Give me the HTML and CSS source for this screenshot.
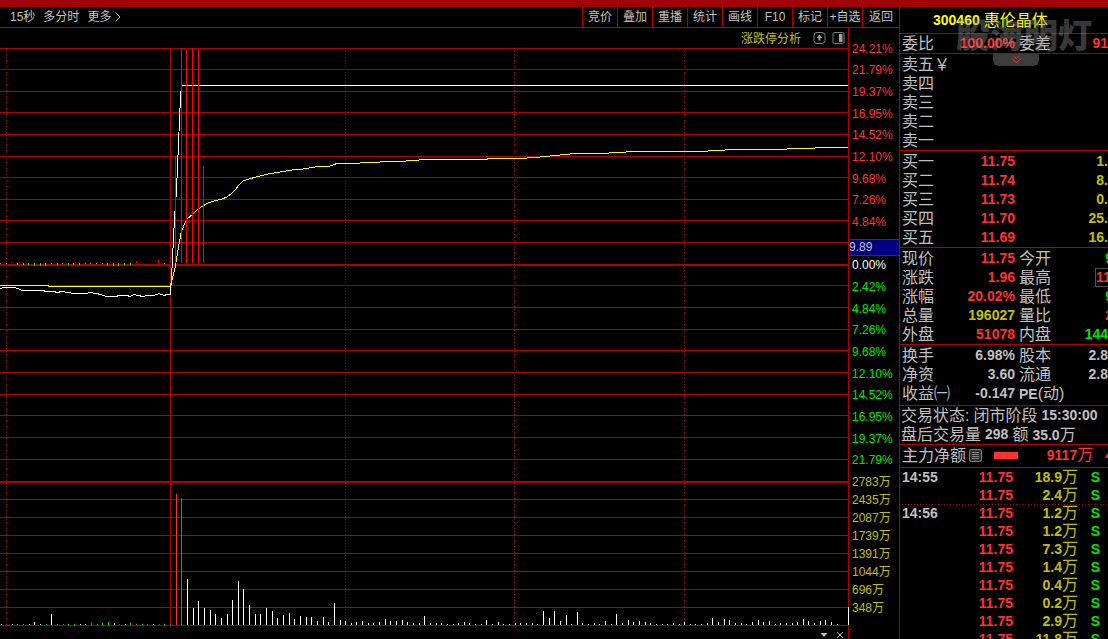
FILE: index.html
```html
<!DOCTYPE html>
<html lang="zh-CN">
<head>
<meta charset="utf-8">
<title>300460 惠伦晶体</title>
<link rel="stylesheet" href="styles.css">
</head>
<body>
<div class="titlebar"></div>
<div class="app">
  <main class="main">
    <nav class="toolbar">
      <div class="periods">
        <button>15秒</button>
        <button>多分时</button>
        <button>更多<svg class="chev" viewBox="0 0 6 10"><path d="M.5 .5L5 5L.5 9.500"/></svg></button>
      </div>
      <div class="tools">
        <button>竞价</button><button>叠加</button><button>重播</button><button>统计</button><button>画线</button><button>F10</button><button>标记</button><button>+自选</button><button>返回</button>
      </div>
    </nav>
    <div class="board">
      <section class="chart">
        <div class="chart-head">
          <a href="#analysis">涨跌停分析</a>
          <button aria-label="上移"><svg viewBox="0 0 13 12"><rect x="1" y=".5" width="11" height="11" rx="3"/><path class="fill" d="M6.500 2.500L9.500 6H7.500V8.500H5.500V6H3.500Z"/></svg></button>
          <button aria-label="侧栏"><svg viewBox="0 0 13 12"><rect x="1" y=".5" width="11" height="11" rx="1.500"/><path class="fill" d="M7 2H10.500V10H7Z"/></svg></button>
        </div>
        <svg class="plot" id="plot" viewBox="0 48 848 578" preserveAspectRatio="none">
          <g id="grid" class="grid"></g>
          <polyline class="price" points="0,288.5 4,287.5 14,287.5 18,288.5 22,290.5 43,290.5 46,291.5 54,291.5 57,292.5 62,291.5 68,292.5 74,293.5 86,293.5 90,292.5 96,293.5 101,294.5 106,296.5 116,296.5 119,295.5 127,295.5 130,296.5 134,294.5 138,295.5 143,296.5 147,295.5 154,295.5 159,293.5 164,295.5 167,294.5 170.500,294.5 172,268 174.500,218 176.500,190 180.500,97 181.500,85.5 848,85.5"/>
          <polyline class="average" points="0,285.5 48,285.5 49,286.5 170,286.5 172,280 175,268 178,250 181,233 184,225 187,219 193,214 198,209 203,206 208,203 214,201 222,199 227,197 232,193 235,190 239,185 243,181 249,179 256,177 268,174 280,172 292,170 303,169 315,167 330,166 337,163.5 350,163.5 380,162 400,161.5 425,159.5 485,159.5 490,158.5 520,158.5 540,157 575,153.5 600,153.5 635,151.5 700,151.5 725,150 775,149.5 800,148.5 830,147.5 848,147.5"/>
          <g id="bars"></g>
        </svg>
        <div class="chart-foot">
          <button aria-label="展开"><svg viewBox="0 0 8 8"><path class="fill" d="M.5 2H7.500L4 6Z"/></svg></button>
          <button aria-label="关闭"><svg viewBox="0 0 8 8"><path d="M1 1L7 7M7 1L1 7"/></svg></button>
        </div>
      </section>
      <div class="axis">
        <div class="percent">
          <span>24.21%</span><span>21.79%</span><span>19.37%</span><span>16.95%</span><span>14.52%</span><span>12.10%</span><span>9.68%</span><span>7.26%</span><span>4.84%</span><span>2.42%<b class="tag">9.89</b></span>
          <span class="white">0.00%</span>
          <span class="green">2.42%</span><span class="green">4.84%</span><span class="green">7.26%</span><span class="green">9.68%</span><span class="green">12.10%</span><span class="green">14.52%</span><span class="green">16.95%</span><span class="green">19.37%</span><span class="green">21.79%</span>
        </div>
        <div class="volume"><span>2783万</span><span>2435万</span><span>2087万</span><span>1739万</span><span>1391万</span><span>1044万</span><span>696万</span><span>348万</span></div>
      </div>
    </div>
  </main>

  <aside class="quote">
    <h1 class="stock"><b>300460</b>惠伦晶体</h1>
    <dl class="rows ratio">
      <div><dt>委比</dt><dd class="red">100.00%</dd><dt>委差</dt><dd class="red">91</dd></div>
    </dl>
    <div class="watermark">股海明灯</div>
    <button class="notch" aria-label="展开"><svg viewBox="0 0 11 8"><path d="M1 2.500L5.500 7L10 2.500M3.500 .5L5.500 2.500L7.500 .5"/></svg></button>
    <table class="book">
      <tr><th>卖五￥</th><td></td><td></td></tr>
      <tr><th>卖四</th><td></td><td></td></tr>
      <tr><th>卖三</th><td></td><td></td></tr>
      <tr><th>卖二</th><td></td><td></td></tr>
      <tr><th>卖一</th><td></td><td></td></tr>
    </table>
    <table class="book">
      <tr><th>买一</th><td class="red">11.75</td><td class="yellow">1.</td></tr>
      <tr><th>买二</th><td class="red">11.74</td><td class="yellow">8.</td></tr>
      <tr><th>买三</th><td class="red">11.73</td><td class="yellow">0.</td></tr>
      <tr><th>买四</th><td class="red">11.70</td><td class="yellow">25.</td></tr>
      <tr><th>买五</th><td class="red">11.69</td><td class="yellow">16.</td></tr>
    </table>
    <dl class="rows five">
      <div><dt>现价</dt><dd class="red">11.75</dd><dt>今开</dt><dd class="green cut">9</dd></div>
      <div><dt>涨跌</dt><dd class="red">1.96</dd><dt>最高</dt><dd class="red boxed">11</dd></div>
      <div><dt>涨幅</dt><dd class="red">20.02%</dd><dt>最低</dt><dd class="green cut">9</dd></div>
      <div><dt>总量</dt><dd class="yellow">196027</dd><dt>量比</dt><dd class="red cut">2</dd></div>
      <div><dt>外盘</dt><dd class="red">51078</dd><dt>内盘</dt><dd class="green">144</dd></div>
    </dl>
    <dl class="rows three">
      <div><dt>换手</dt><dd>6.98%</dd><dt>股本</dt><dd>2.8</dd></div>
      <div><dt>净资</dt><dd>3.60</dd><dt>流通</dt><dd>2.8</dd></div>
      <div><dt>收益㈠</dt><dd>-0.147</dd><dt><b>PE</b>(动)</dt><dd></dd></div>
    </dl>
    <div class="status">
      <p>交易状态: <span>闭市阶段</span> <b>15:30:00</b></p>
      <p>盘后交易量 <b>298</b> <span>额</span> <span><b>35.0</b>万</span></p>
    </div>
    <div class="flow">
      <span>主力净额</span>
      <svg class="list" viewBox="0 0 13 13"><rect x=".5" y=".5" width="12" height="12" rx="2"/><path d="M3 3.500H10M3 5.500H10M3 7.500H10M3 9.500H10"/></svg>
      <i class="meter"></i>
      <span class="red net"><b>9117</b>万</span>
      <b class="red cut">4</b>
    </div>
    <table class="ticks">
      <tr><th>14:55</th><td>11.75</td><td>18.9<span>万</span></td><td>S</td></tr>
      <tr><th></th><td>11.75</td><td>2.4<span>万</span></td><td>S</td></tr>
      <tr class="minute"><th>14:56</th><td>11.75</td><td>1.2<span>万</span></td><td>S</td></tr>
      <tr><th></th><td>11.75</td><td>1.2<span>万</span></td><td>S</td></tr>
      <tr><th></th><td>11.75</td><td>7.3<span>万</span></td><td>S</td></tr>
      <tr><th></th><td>11.75</td><td>1.4<span>万</span></td><td>S</td></tr>
      <tr><th></th><td>11.75</td><td>0.4<span>万</span></td><td>S</td></tr>
      <tr><th></th><td>11.75</td><td>0.2<span>万</span></td><td>S</td></tr>
      <tr><th></th><td>11.75</td><td>2.9<span>万</span></td><td>S</td></tr>
      <tr><th></th><td>11.75</td><td>11.8<span>万</span></td><td>S</td></tr>
    </table>
  </aside>
</div>
<script src="chart.js"></script>
</body>
</html>
```

FILE: styles.css
```css
* { box-sizing: border-box; }

:root {
  --line: #b00000;
  --red: #ff3232;
  --green: #00e600;
  --yellow: #c0c000;
  --text: #c0c0c0;
}

body {
  margin: 0;
  height: 100vh;
  overflow: hidden;
  display: flex;
  flex-direction: column;
  background: #000;
  color: var(--text);
  font: 12px/16px "Liberation Sans", "Noto Sans CJK SC", sans-serif;
}

button {
  margin: 0;
  padding: 0;
  border: 0;
  background: none;
  color: inherit;
  font: inherit;
  white-space: nowrap;
}

svg { display: block; fill: none; }

.titlebar { flex: none; height: 7px; background: #a00408; }

.app {
  flex: 1;
  min-height: 0;
  display: grid;
  grid-template-columns: minmax(0, 1fr) 209px;
}

.red { color: var(--red); }
.green { color: var(--green); }
.yellow { color: var(--yellow); }
.white { color: #fff; }

/* Left side: toolbar, chart, axis */
.main { display: flex; flex-direction: column; min-width: 0; min-height: 0; }

.toolbar {
  flex: none;
  display: flex;
  justify-content: space-between;
  height: 21px;
  border-bottom: 1px solid var(--line);
}

.periods { display: flex; gap: 8px; padding-left: 10px; }
.periods button { display: flex; align-items: center; gap: 4px; }
.chev { width: 6px; height: 10px; stroke: var(--text); }

.tools { display: flex; }
.tools button { width: 35px; border-left: 1px solid var(--line); }
.tools button:last-child { width: 37px; }

.board { flex: 1; min-height: 0; display: flex; }

.chart {
  flex: 1;
  min-width: 0;
  display: flex;
  flex-direction: column;
  border-right: 1px solid var(--line);
}

.chart-head {
  flex: none;
  display: flex;
  justify-content: flex-end;
  align-items: center;
  gap: 6px;
  height: 20px;
  padding-right: 3px;
}
.chart-head a { margin-right: 6px; padding-top: 2px; color: var(--yellow); text-decoration: none; }
.chart-head svg { width: 13px; height: 12px; stroke: #808080; }
.chart-head .fill { fill: #a0a0a0; stroke: none; }

.plot { flex: 1; min-height: 0; width: 100%; overflow: visible; }
.grid path { stroke: var(--line); shape-rendering: crispEdges; }
.grid .thick { stroke-width: 2; }
.grid .dotted { stroke-dasharray: 1 2; }
.price { stroke: #fff; shape-rendering: crispEdges; }
.average { stroke: #ff0; shape-rendering: crispEdges; }
#bars path { shape-rendering: crispEdges; }

.chart-foot {
  flex: none;
  display: flex;
  justify-content: flex-end;
  align-items: flex-end;
  gap: 8px;
  height: 13px;
  padding-right: 4px;
}
.chart-foot svg { width: 8px; height: 8px; stroke: var(--text); }
.chart-foot .fill { fill: var(--text); stroke: none; }

.axis {
  flex: none;
  display: flex;
  flex-direction: column;
  justify-content: space-between;
  width: 50px;
  padding: 10px 0 22px 3px;
}
.percent, .volume { display: flex; flex-direction: column; }
.percent { flex: 433; color: var(--red); }
.volume { flex: 144; margin-top: 2px; color: var(--yellow); }
.percent span, .volume span { flex: 1 1 0; min-height: 0; display: flex; align-items: center; position: relative; }
.tag {
  position: absolute;
  top: 6px;
  left: -3px;
  right: 0;
  border: solid var(--line);
  border-width: 1px 0;
  background: #000080;
  color: var(--text);
  font-weight: normal;
  line-height: 15px;
}

/* Right side: quote panel */
.quote {
  position: relative;
  overflow: hidden;
  border-left: 1px solid var(--line);
  font-size: 16px;
  line-height: 19px;
  white-space: nowrap;
}
.quote b { font-size: 14px; }

.stock {
  display: flex;
  gap: 4px;
  margin: 0;
  padding-left: 33px;
  height: 27px;
  border-bottom: 1px solid var(--line);
  color: #ff0;
  font-size: 16px;
  font-weight: normal;
  line-height: 27px;
}

.rows, .book { margin: 0; padding: 1px 0 0 2px; border-bottom: 1px solid var(--line); }
.rows > div { display: flex; height: 19px; }
.rows dt { flex: none; width: 32px; }
.rows dd { margin: 0; font-size: 14px; font-weight: bold; text-align: right; }
.rows dd:nth-child(2) { flex: none; width: 81px; margin-right: 4px; }
.rows dd:last-child { margin-left: auto; }
.ratio { padding-top: 0; }
.five { height: 97px; }
.three { height: 61px; }
.quote .cut { margin-right: -5px; }
.rows .boxed { width: 13px; border: 1px solid #505050; border-right: 0; line-height: 17px; }

.book {
  width: 100%;
  height: 97px;
  table-layout: fixed;
  border-collapse: separate;
  border-spacing: 0;
}
.book th, .book td { height: 19px; padding: 0; line-height: 19px; }
.book th { width: 48px; font-weight: normal; text-align: left; }
.book td { font-size: 14px; font-weight: bold; text-align: right; }
.book td:nth-child(2) { width: 65px; }

.watermark {
  position: absolute;
  top: 10px;
  right: 16px;
  color: rgba(150, 150, 150, 0.4);
  font-size: 34px;
  font-weight: 900;
  line-height: 38px;
}
.notch {
  position: absolute;
  top: 47px;
  left: 93px;
  display: grid;
  place-items: center;
  width: 46px;
  height: 12px;
  border-radius: 0 0 6px 6px;
  background: #3c3c3c;
}
.notch svg { width: 11px; height: 8px; stroke: var(--red); }

.status { height: 39px; padding-left: 1px; border-bottom: 1px solid var(--line); }
.status p { display: flex; gap: 4px; margin: 0; height: 19px; }

.flow {
  display: flex;
  align-items: center;
  height: 23px;
  padding: 0 0 2px 2px;
  border-bottom: 1px solid var(--line);
}
.list { width: 13px; height: 13px; margin-left: 3px; fill: #303030; stroke: #808080; }
.meter { width: 24px; height: 7px; margin-left: 12px; background: var(--red); }
.net { margin-left: auto; }
.flow .cut { margin-left: 12px; }

.ticks {
  width: 100%;
  table-layout: fixed;
  border-collapse: separate;
  border-spacing: 0;
  font-size: 14px;
  font-weight: bold;
}
.ticks th, .ticks td { height: 18px; padding: 0; line-height: 17px; text-align: right; }
.ticks th { width: 48px; padding-left: 2px; text-align: left; }
.ticks td:nth-child(2) { width: 65px; color: var(--red); }
.ticks td:nth-child(3) { width: 65px; color: var(--yellow); }
.ticks td:nth-child(4) { padding-right: 8px; color: var(--green); }
.ticks span { font-size: 16px; font-weight: normal; line-height: 0; }
.ticks .minute { background: repeating-linear-gradient(90deg, transparent 0 2px, var(--line) 2px 3px) 0 0 / 100% 1px no-repeat; }
```

FILE: chart.js
```js
const NS = 'http://www.w3.org/2000/svg';

function addPath(parent, d, attrs) {
  const path = document.createElementNS(NS, 'path');
  path.setAttribute('d', d);
  Object.entries(attrs || {}).forEach(([k, v]) => path.setAttribute(k, v));
  parent.appendChild(path);
}

const grid = document.getElementById('grid');
const bars = document.getElementById('bars');

// Horizontal levels: price levels, then volume levels
[48, 69, 91, 112, 134, 156, 177, 199, 220, 242, 285, 307, 329, 350, 372, 394, 415, 437, 459,
  499, 517, 535, 553, 571, 589, 607, 625].forEach(y => addPath(grid, `M0 ${y + 0.5}H848`));
[265, 482].forEach(y => addPath(grid, `M0 ${y}H848`, { class: 'thick' }));
[6, 345, 514, 684].forEach(x => addPath(grid, `M${x + 0.5} 51V625`, { class: 'dotted' }));
addPath(grid, 'M170.5 48V625');

// [x, top] of the limit-up order bars
[[175, 156], [181, 48], [186, 50], [192, 48], [198, 49], [203, 166]]
  .forEach(([x, y]) => addPath(bars, `M${x + 0.5} ${y}V263`, { stroke: '#ff0000' }));

// [x, height] of the small marks under the zero line
[[0, 1], [6, 1], [17, 2], [23, 2], [28, 2], [34, 3], [40, 3], [45, 3], [51, 1], [57, 2], [62, 1],
  [68, 2], [73, 2], [79, 2], [85, 1], [90, 1], [96, 1], [102, 1], [107, 3], [113, 3], [118, 3],
  [124, 2], [130, 2], [164, 1]]
  .forEach(([x, h]) => addPath(bars, `M${x + 0.5} 263v${h}`, { stroke: '#00ff00' }));
[[11, 262, 1], [136, 261, 2], [158, 260, 3]]
  .forEach(([x, y, h]) => addPath(bars, `M${x + 0.5} ${y}v${h}`, { stroke: '#ff0000' }));

// Volume bars: x, top
const volume = {
  '#ffffff': [1, 624, 12, 624, 29, 624, 34, 622, 40, 624, 51, 614, 80, 624, 85, 624, 114, 623, 125, 624,
    153, 624, 187, 579, 193, 608, 198, 601, 204, 608, 210, 610, 215, 614, 221, 618, 227, 614, 232, 600,
    238, 581, 243, 589, 249, 605, 255, 614, 260, 614, 266, 608, 272, 611, 277, 618, 283, 615, 289, 613,
    294, 619, 300, 616, 306, 617, 311, 617, 317, 621, 323, 617, 328, 622, 334, 603, 340, 620, 345, 621,
    351, 623, 356, 622, 362, 621, 368, 623, 373, 623, 379, 622, 385, 619, 390, 621, 396, 621, 402, 620,
    407, 622, 413, 623, 419, 623, 424, 616, 430, 623, 436, 623, 441, 623, 447, 624, 453, 624, 458, 623,
    464, 622, 469, 623, 475, 624, 481, 624, 486, 620, 492, 624, 498, 622, 503, 624, 509, 624, 515, 623,
    520, 623, 526, 623, 532, 623, 537, 624, 543, 611, 549, 618, 554, 611, 560, 621, 566, 615, 571, 624,
    577, 612, 582, 623, 588, 624, 594, 623, 599, 624, 605, 621, 611, 624, 616, 614, 622, 623, 628, 620,
    633, 622, 639, 621, 645, 622, 650, 623, 656, 624, 662, 624, 667, 624, 673, 623, 679, 624, 684, 622,
    690, 624, 695, 624, 701, 624, 707, 623, 712, 618, 718, 622, 724, 619, 729, 620, 735, 623, 741, 623,
    746, 624, 752, 622, 758, 620, 763, 622, 769, 621, 775, 624, 780, 623, 786, 623, 792, 623, 797, 622,
    803, 619, 808, 621, 814, 623, 820, 621, 825, 620, 831, 622, 837, 624, 848, 607],
  '#00e600': [17, 624, 23, 624, 46, 624, 57, 624, 68, 624, 74, 624, 97, 624, 102, 623, 108, 622, 130, 623,
    142, 624, 164, 624],
  '#ff3232': [6, 624, 63, 624, 91, 623, 119, 624, 136, 624, 147, 624, 159, 624, 170, 624, 176, 494, 181, 498]
};
Object.entries(volume).forEach(([stroke, data]) => {
  let d = '';
  for (let i = 0; i < data.length; i += 2) d += `M${data[i] + 0.5} ${data[i + 1]}V625`;
  addPath(bars, d, { stroke });
});
```
